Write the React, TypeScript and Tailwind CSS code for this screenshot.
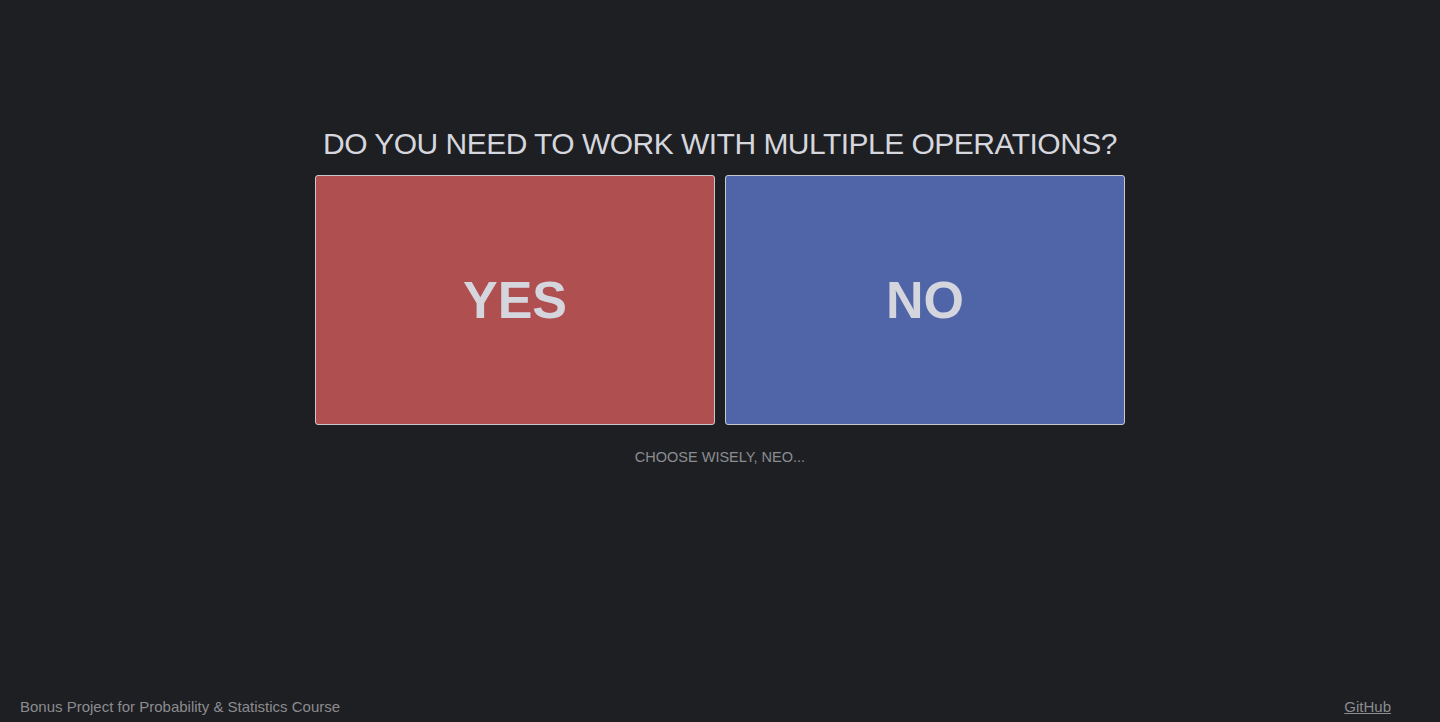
export default function App() {
  return (
    <div className="min-h-screen h-[722px] bg-[#1e1f22] flex flex-col font-['Liberation_Sans',Arial,sans-serif] overflow-hidden">
      {/* Question */}
      <div className="flex-1 flex flex-col items-center pt-[124px]">
        <h1 className="text-[30px] leading-[40px] text-[#d5d6de] tracking-[-0.52px]">
          DO YOU NEED TO WORK WITH MULTIPLE OPERATIONS?
        </h1>
        <div className="flex gap-[10px] mt-[11px]">
          <button className="w-[400px] h-[250px] bg-[#b04f4f] border border-[#c9c9cc] rounded-[3px] text-[52px] font-bold text-[#d5d5de]">
            YES
          </button>
          <button className="w-[400px] h-[250px] bg-[#5064a8] border border-[#c9c9cc] rounded-[3px] text-[52px] font-bold text-[#d5d5de]">
            NO
          </button>
        </div>
        <p className="mt-[22px] text-[14.5px] text-[#8b8d93]">CHOOSE WISELY, NEO...</p>
      </div>

      {/* Footer */}
      <div className="flex items-center justify-between pl-[20px] pr-[49px] h-[28px] pb-[2px] text-[15px] text-[#8b8c90]">
        <span>Bonus Project for Probability &amp; Statistics Course</span>
        <a href="#" className="underline">GitHub</a>
      </div>
    </div>
  )
}
